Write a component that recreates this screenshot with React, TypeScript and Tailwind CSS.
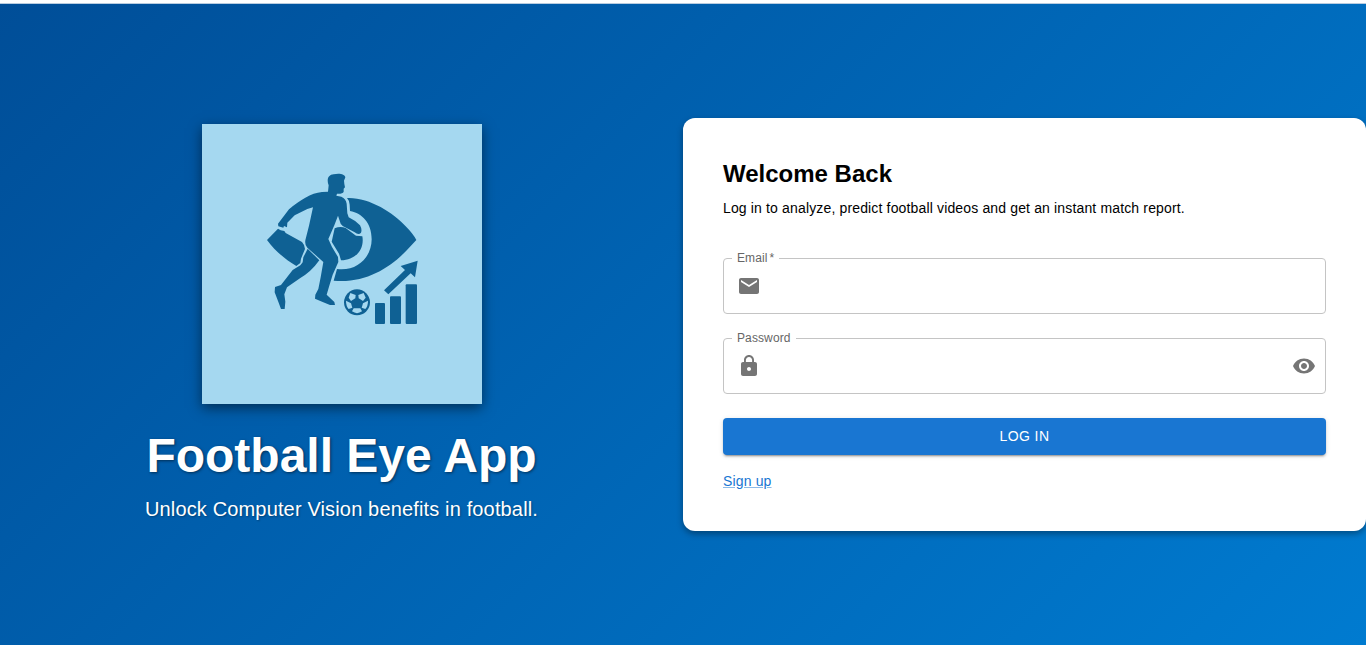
import { useState } from "react";
import type { ReactNode } from "react";

function Logo() {
  return (
    <svg viewBox="-159 -123 840 840" className="block size-[280px] bg-[#a5d8f0] shadow-[0_4px_12px_rgba(0,0,0,0.5)]" fill="#0f6194" role="img" aria-label="Football Eye">
      {/* eye */}
      <path d="M276 99C340 96 415 142 452 184Q474 206 484 225Q470 240 456 255C405 309 330 356 236 347L246 312C306 320 350 277 350 223C350 174 322 145 285 138L284 119Q283 106 276 99Z" />
      <path d="M36 225L69 191L77 196L88 198L92 204L141 231L147 240L150 252L138 281L136 294L124 303C91 283 61 259 36 225Z" />
      <path d="M239 190Q256 182 272 189L303 212L322 214C329 252 303 285 258 286L252 266L230 230Z" />
      {/* player */}
      <path d="M219 80L221 61C214 43 220 29 236 28C252 24 270 27 271 37L267 47L268 57L270 67L266 71L266 80Q263 87 246 86L244 92L259 95Q273 101 275 116L277 145L281 157Q302 167 315 181Q322 194 318 203Q311 212 299 202L263 183L257 176L249 152L238 181L220 222L231 246L249 276L250 291L233 329L222 365L215 389L238 411L240 420L225 420L203 411L180 401L181 389L190 372L197 337L205 291L157 248Q149 241 151 226L162 182L174 127L157 132L119 151L97 173L96 187L87 183L85 188L70 184L69 176L102 133C134 106 168 84 201 81Z" />
      <path d="M158 251L193 286Q168 321 136 339L96 367L88 388L91 410L89 432L78 432L71 413L59 382L60 366L78 360L113 315L136 301L143 292L145 277Z" />
      {/* ball */}
      <circle cx="306" cy="412" r="39" />
      <g fill="#a5d8f0">
        <path d="M286 384L302 390L301 400L288 408L281 398Z" />
        <path d="M326 384L310 390L311 400L324 408L332 398Z" />
        <path d="M273 407L288 415L292 428L281 432Q273 424 273 407Z" />
        <path d="M339 407L324 415L320 428L331 432Q339 424 339 407Z" />
        <path d="M296 430H316L321 439Q306 450 291 439Z" />
      </g>
      {/* rising chart */}
      <rect x="360" y="414" width="30" height="63" rx="3" />
      <rect x="405" y="394" width="33" height="83" rx="3" />
      <rect x="452" y="358" width="34" height="119" rx="3" />
      <path d="M387 376L450 315L437 303L488 287L480 337L467 325L400 388Z" />
    </svg>
  );
}

function Field({ label, required, children }: { label: string; required?: boolean; children: ReactNode }) {
  return (
    <div className="relative flex h-14 items-center justify-between rounded border border-[#c4c4c4] pr-[9px] pl-[13px] text-[#757575]">
      <label className="absolute -top-[10px] left-2 bg-white px-[5px] text-xs leading-[18px] tracking-[0.11px] whitespace-nowrap text-[#666]">
        {label}
        {required && <span className="ml-[2px]">*</span>}
      </label>
      {children}
    </div>
  );
}

export default function App() {
  const [shown, setShown] = useState(false);
  return (
    <div className="h-[646px] bg-white pt-[3px] pb-px font-['Liberation_Sans',Arial,sans-serif]">
      <main className="grid h-full grid-cols-2 items-center border-t border-[#b8cce0] bg-[linear-gradient(135deg,#004e98,#007bd0)]">
        <section className="flex flex-col items-center text-white">
          <Logo />
          <h1 className="mt-6 text-[48px] leading-[56px] font-bold whitespace-nowrap [text-shadow:1px_1px_3px_rgba(0,0,0,0.5)]">Football Eye App</h1>
          <p className="mt-[9px] text-[20px] leading-8 tracking-[0.15px] whitespace-nowrap [text-shadow:1px_1px_2px_rgba(0,0,0,0.3)]">Unlock Computer Vision benefits in football.</p>
        </section>
        <section className="h-[413px] rounded-xl bg-white px-10 pt-10 text-black shadow-[0_3px_6px_rgba(0,0,0,0.35)]">
          <h2 className="text-2xl leading-8 font-bold">Welcome Back</h2>
          <p className="mt-2 text-sm leading-5 tracking-[0.15px]">Log in to analyze, predict football videos and get an instant match report.</p>
          <form className="mt-10 flex flex-col gap-6" onSubmit={(e) => e.preventDefault()}>
            <Field label="Email" required>
              <svg viewBox="0 0 24 24" className="size-6" fill="currentColor"><path d="M20 4H4c-1.1 0-2 .9-2 2v12c0 1.1.9 2 2 2h16c1.1 0 2-.9 2-2V6c0-1.1-.9-2-2-2m0 4-8 5-8-5V6l8 5 8-5z" /></svg>
              <input aria-label="Email" className="h-full flex-1 outline-none" />
            </Field>
            <Field label="Password">
              <svg viewBox="0 0 24 24" className="size-6" fill="currentColor"><path d="M18 8h-1V6c0-2.76-2.24-5-5-5S7 3.24 7 6v2H6c-1.1 0-2 .9-2 2v10c0 1.1.9 2 2 2h12c1.1 0 2-.9 2-2V10c0-1.1-.9-2-2-2m-6 9c-1.1 0-2-.9-2-2s.9-2 2-2 2 .9 2 2-.9 2-2 2m3.1-9H8.9V6c0-1.71 1.39-3.1 3.1-3.1s3.1 1.39 3.1 3.1z" /></svg>
              <input aria-label="Password" type={shown ? "text" : "password"} className="h-full flex-1 outline-none" />
              <button type="button" aria-label="Show password" onClick={() => setShown(!shown)}>
                <svg viewBox="0 0 24 24" className="block size-6" fill="currentColor"><path d="M12 4.5C7 4.5 2.73 7.61 1 12c1.73 4.39 6 7.5 11 7.5s9.27-3.11 11-7.5c-1.73-4.39-6-7.5-11-7.5M12 17c-2.76 0-5-2.24-5-5s2.24-5 5-5 5 2.24 5 5-2.24 5-5 5m0-8c-1.66 0-3 1.34-3 3s1.34 3 3 3 3-1.34 3-3-1.34-3-3-3" /></svg>
              </button>
            </Field>
            <button className="h-[37px] rounded bg-[#1976d2] pb-0.5 text-sm tracking-[0.4px] text-white shadow-[0_3px_1px_-2px_rgba(0,0,0,0.2),0_2px_2px_rgba(0,0,0,0.14),0_1px_5px_rgba(0,0,0,0.12)]">LOG IN</button>
          </form>
          <a href="#signup" className="mt-4 inline-block text-sm leading-5 tracking-[0.15px] text-[#1976d2] underline decoration-[#1976d2]/50">Sign up</a>
        </section>
      </main>
    </div>
  );
}
